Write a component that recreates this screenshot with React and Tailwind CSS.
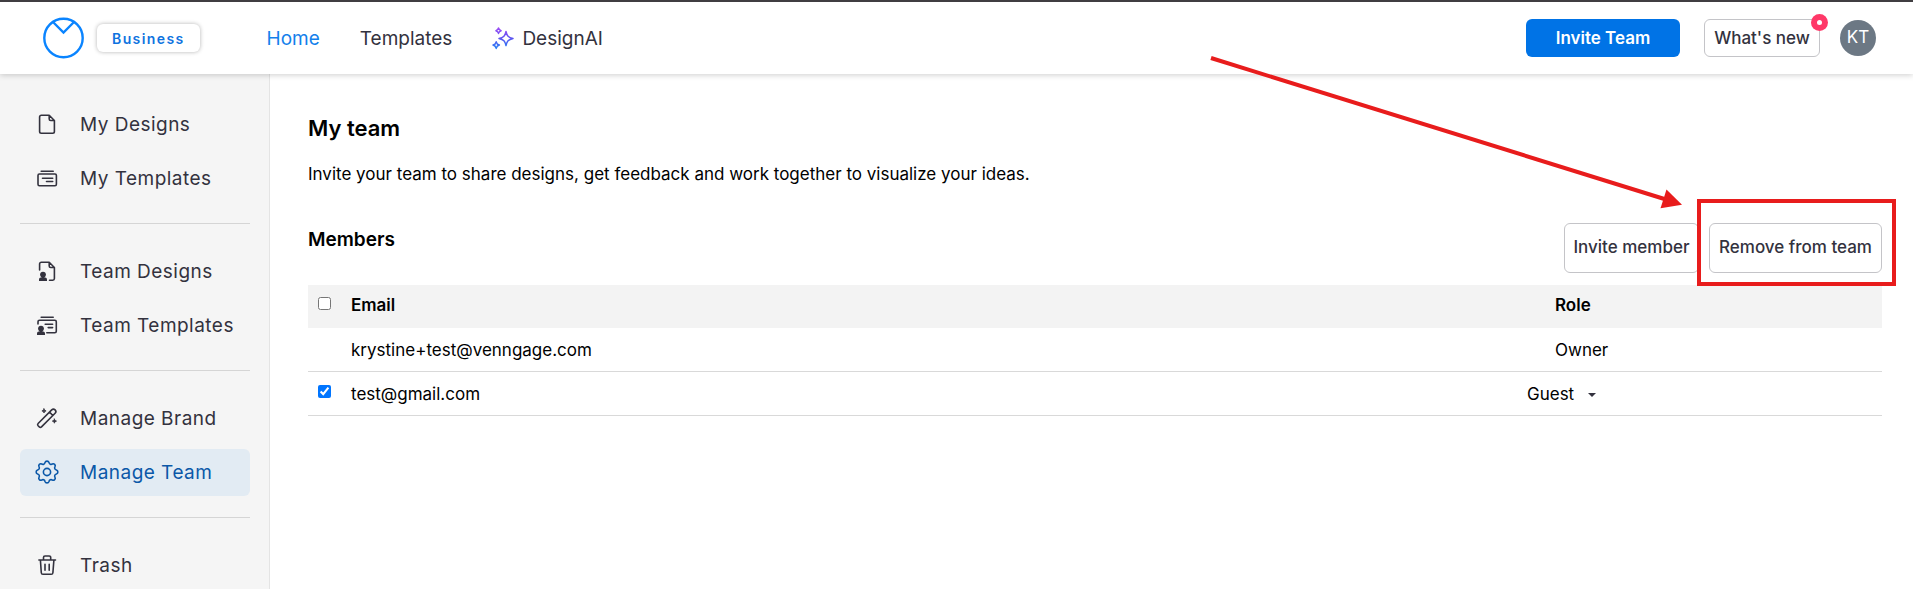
import React, { useState } from "react";
import clsx from "clsx";

function Icon({ children, size = 24 }) {
  return (
    <svg
      width={size}
      height={size}
      viewBox="0 0 24 24"
      fill="none"
      stroke="currentColor"
      strokeWidth="1.6"
      strokeLinecap="round"
      strokeLinejoin="round"
      className="mb-px shrink-0"
      aria-hidden="true"
    >
      {children}
    </svg>
  );
}

const DesignIcon = () => (
  <Icon>
    <path d="M14.2 3.3H6.3a1.7 1.7 0 0 0-1.7 1.7v14.5a1.7 1.7 0 0 0 1.7 1.7h11.4a1.7 1.7 0 0 0 1.7-1.7V8.5zM14.2 3.3V7a1.5 1.5 0 0 0 1.5 1.5h3.7" />
  </Icon>
);

const TemplateIcon = () => (
  <Icon>
    <path d="M6.2 5.3h12" />
    <rect x="3" y="8" width="18.4" height="11.7" rx="1.4" />
    <path d="M7.5 12.2h10.2M11.5 15.5h6.2" />
  </Icon>
);

// Small person glyph sitting in the lower left corner of the team icons
const Person = ({ x = 0 }) => (
  <g transform={`translate(${x} 0)`} fill="currentColor" stroke="none">
    <circle cx="8" cy="15.6" r="2.9" />
    <path d="M6.6 17h2.8v1.6H6.6zM4 22v-1.6a1.8 1.8 0 0 1 1.8-1.8h4.4a1.8 1.8 0 0 1 1.8 1.8V22z" />
  </g>
);

const TeamDesignIcon = () => (
  <Icon>
    <path d="M4.6 11V5a1.7 1.7 0 0 1 1.7-1.7h7.9l5.2 5.2v11a1.7 1.7 0 0 1-1.7 1.7h-3.2M14.2 3.3V7a1.5 1.5 0 0 0 1.5 1.5h3.7" />
    <Person />
  </Icon>
);

const TeamTemplateIcon = () => (
  <Icon>
    <path d="M6.2 4.3h12M3 11V8.7a1.5 1.5 0 0 1 1.5-1.5h15.3a1.5 1.5 0 0 1 1.5 1.5v9.5a1.5 1.5 0 0 1-1.5 1.5h-8M10.2 11.2h7.4M13.2 14.6h4.4" />
    <Person x={-2} />
  </Icon>
);

const WandIcon = () => (
  <Icon>
    <path d="M16.7 3.9a2.4 2.4 0 0 1 3.4 3.4L6.5 20.9a1.6 1.6 0 0 1-2.2 0l-1.2-1.2a1.6 1.6 0 0 1 0-2.2zM14.5 6.1l3.4 3.4" />
    <path
      d="M9 2.8l.6 1.5 1.5.6-1.5.6L9 7l-.6-1.5-1.5-.6 1.5-.6zM19.4 13l.6 1.5 1.5.6-1.5.6-.6 1.5-.6-1.5-1.5-.6 1.5-.6z"
      fill="currentColor"
      strokeWidth="0.8"
    />
  </Icon>
);

const GearIcon = () => (
  <Icon>
    <circle cx="12" cy="12" r="3.6" />
    <path d="M10 2.6a2.1 2.1 0 0 1 4 0c.4 1.6 2 2.2 3.3 1.4a2 2 0 0 1 2.7 2.7c-.8 1.4-.2 2.9 1.4 3.3a2.1 2.1 0 0 1 0 4c-1.6.4-2.2 1.9-1.4 3.3a2 2 0 0 1-2.7 2.7c-1.4-.8-2.9-.2-3.3 1.4a2.1 2.1 0 0 1-4 0c-.4-1.6-1.9-2.2-3.3-1.4a2 2 0 0 1-2.7-2.7c.8-1.4.2-2.9-1.4-3.3a2.1 2.1 0 0 1 0-4c1.6-.4 2.2-1.9 1.4-3.3a2 2 0 0 1 2.7-2.7c1.4.8 2.9.2 3.3-1.4z" />
  </Icon>
);

const TrashIcon = () => (
  <Icon>
    <path d="M3.9 7h16.6M8.5 7V4.5A1.5 1.5 0 0 1 10 3h4.2a1.5 1.5 0 0 1 1.5 1.5V7M5.4 7l.9 12.7A1.7 1.7 0 0 0 8 21.3h8.2a1.7 1.7 0 0 0 1.7-1.6L18.9 7M10 11.2v6M14.2 11.2v6" />
  </Icon>
);

const SparklesIcon = () => (
  <svg width="22" height="24" viewBox="0 0 22 24" fill="none" strokeWidth="1.5" strokeLinejoin="round" aria-hidden="true">
    <defs>
      <linearGradient id="sparkle" gradientUnits="userSpaceOnUse" x1="8" y1="0" x2="8" y2="23">
        <stop offset="0" stopColor="#a24bf5" />
        <stop offset="0.5" stopColor="#5b55f0" />
        <stop offset="1" stopColor="#1f86f5" />
      </linearGradient>
    </defs>
    <g stroke="url(#sparkle)">
      <path d="M14 4.5c.9 4.3 2.3 5.9 7 7-4.7 1.1-6.1 2.7-7 7-.9-4.3-2.3-5.9-7-7 4.7-1.1 6.1-2.7 7-7z" />
      <path d="M6.5 1c.4 1.7.9 2.2 2.6 2.7-1.7.5-2.2 1-2.6 2.7-.4-1.7-.9-2.2-2.6-2.7 1.7-.5 2.2-1 2.6-2.7z" />
      <path d="M4.2 14.8c.5 2.2 1.1 2.8 3.2 3.3-2.1.5-2.7 1.1-3.2 3.3-.5-2.2-1.1-2.8-3.2-3.3 2.1-.5 2.7-1.1 3.2-3.3z" />
    </g>
  </svg>
);

const Logo = () => (
  <svg width="42" height="42" viewBox="0 0 42 42" fill="none" stroke="#0a84ff" strokeWidth="2.4" aria-hidden="true">
    <circle cx="21.5" cy="21" r="19.2" />
    <path d="M11 5l10.5 10.5L32 5" />
  </svg>
);

const navGroups = [
  [
    { label: "My Designs", icon: DesignIcon },
    { label: "My Templates", icon: TemplateIcon },
  ],
  [
    { label: "Team Designs", icon: TeamDesignIcon },
    { label: "Team Templates", icon: TeamTemplateIcon },
  ],
  [
    { label: "Manage Brand", icon: WandIcon },
    { label: "Manage Team", icon: GearIcon, active: true },
  ],
  [{ label: "Trash", icon: TrashIcon }],
];

function Header() {
  return (
    <header className="relative z-10 flex h-[74px] items-center border-t-2 border-[#403e41] bg-white pr-[37px] pl-[42px] shadow-[0_1px_6px_rgba(0,0,0,0.2)]">
      <a href="#home" aria-label="Venngage">
        <Logo />
      </a>
      <span className="ml-[13px] flex h-7 items-center rounded-md px-[15px] text-[14px] font-semibold tracking-widest text-[#0f73e0] shadow-[0_0_4px_rgba(0,0,0,0.3)]">
        Business
      </span>
      <nav className="ml-[67px] flex items-center gap-10 pt-0.5 text-[19px] text-[#33323e]">
        <a href="#home" className="text-[#1380eb]">Home</a>
        <a href="#templates">Templates</a>
        <a href="#designai" className="flex items-center gap-2">
          <SparklesIcon />
          DesignAI
        </a>
      </nav>
      <div className="ml-auto flex items-center">
        <button className="h-[38px] w-[154px] rounded-md bg-[#0073e6] pt-0.5 text-[17px] font-semibold text-white">
          Invite Team
        </button>
        <button className="relative ml-6 h-[38px] w-[116px] rounded-md border border-[#c4c4c8] pt-0.5 text-[17px] font-medium text-[#33323e]">
          What's new
          <span className="absolute -top-1.5 -right-[9px] flex size-[17px] items-center justify-center rounded-full bg-[#ff3868]">
            <span className="size-[5px] rounded-full bg-white" />
          </span>
        </button>
        <button className="ml-5 size-9 rounded-full bg-[#6c7884] text-[17px] text-white">KT</button>
      </div>
    </header>
  );
}

function Sidebar() {
  return (
    <aside className="w-[270px] shrink-0 border-r border-[#e4e4e4] bg-[#f5f5f5] pt-[27px] pr-[19px] pl-5">
      {navGroups.map((group, i) => (
        <ul
          key={i}
          className={clsx("flex flex-col gap-[7px]", i > 0 && "mt-[21px] border-t border-[#d5d5d5] pt-6")}
        >
          {group.map(({ label, icon: NavIcon, active }) => (
            <li key={label}>
              <a
                href="#"
                className={clsx(
                  "flex h-[47px] items-center gap-[21px] rounded-md pl-[15px] text-[19px] tracking-wide whitespace-nowrap",
                  active ? "bg-[#e2ebf3] text-[#0b58a8]" : "text-[#33323e]"
                )}
              >
                <NavIcon />
                <span className="pt-0.5">{label}</span>
              </a>
            </li>
          ))}
        </ul>
      ))}
    </aside>
  );
}

function RemoveCallout() {
  return (
    <>
      <span className="pointer-events-none absolute -top-6 -right-[14px] -bottom-[13px] -left-3 border-4 border-[#e81c1c]" />
      <svg
        width="474"
        height="156"
        viewBox="0 0 474 156"
        className="pointer-events-none absolute right-full bottom-full z-20 mr-[26px] mb-3"
        aria-hidden="true"
      >
        <path d="M2 3l455 141.5" stroke="#e81c1c" strokeWidth="4" />
        <path d="M457.5 134.5l15.5 15.2-21.5 3.5z" fill="#e81c1c" />
      </svg>
    </>
  );
}

function MembersTable() {
  const [checked, setChecked] = useState(true);

  return (
    <table className="mt-3 w-full table-fixed border-separate border-spacing-0 text-left text-[17px] leading-6">
      <colgroup>
        <col className="w-[43px]" />
        <col />
        <col className="w-[355px]" />
      </colgroup>
      <thead>
        <tr className="h-[43px] bg-[#f3f3f3]">
          <th className="pb-1.5 pl-[10px] align-middle">
            <input type="checkbox" aria-label="Select all members" className="block size-[13px]" />
          </th>
          <th className="pb-1 font-semibold">Email</th>
          <th className="pb-1 pl-7 font-semibold">Role</th>
        </tr>
      </thead>
      <tbody className="[&_td]:border-b [&_td]:border-[#d9d9d9]">
        <tr className="h-11">
          <td />
          <td>krystine+test@venngage.com</td>
          <td className="pl-7">Owner</td>
        </tr>
        <tr className="h-11">
          <td className="pb-1 pl-[10px] align-middle">
            <input
              type="checkbox"
              aria-label="Select test@gmail.com"
              checked={checked}
              onChange={(e) => setChecked(e.target.checked)}
              className="block size-[13px]"
            />
          </td>
          <td>test@gmail.com</td>
          <td>
            <div className="relative inline-block align-middle">
              <select aria-label="Role" className="block w-[69px] appearance-none leading-6">
                <option>Guest</option>
              </select>
              <svg width="8" height="4" viewBox="0 0 8 4" className="pointer-events-none absolute top-[11px] right-0" aria-hidden="true">
                <path d="M0 0h8L4 4z" fill="#33323e" />
              </svg>
            </div>
          </td>
        </tr>
      </tbody>
    </table>
  );
}

export default function App() {
  return (
    <div className="flex min-h-screen flex-col bg-white font-['Inter',sans-serif] text-black">
      <Header />
      <div className="flex grow">
        <Sidebar />
        <main className="min-w-0 grow pt-10 pr-[31px] pl-[38px]">
          <h1 className="text-[22px] leading-7 font-semibold">My team</h1>
          <p className="mt-5 text-[17px] leading-6">
            Invite your team to share designs, get feedback and work together to visualize your ideas.
          </p>
          <div className="mt-[37px] flex items-center justify-between">
            <h2 className="mb-4 text-[19px] leading-7 font-semibold">Members</h2>
            <div className="flex gap-[10px]">
              <button className="h-[50px] w-[135px] rounded-md border border-[#c4c4c8] text-[17px] font-medium text-[#33323e]">
                Invite member
              </button>
              <div className="relative">
                <button className="h-[50px] w-[173px] rounded-md border border-[#c4c4c8] text-[17px] font-medium text-[#33323e]">
                  Remove from team
                </button>
                <RemoveCallout />
              </div>
            </div>
          </div>
          <MembersTable />
        </main>
      </div>
    </div>
  );
}
